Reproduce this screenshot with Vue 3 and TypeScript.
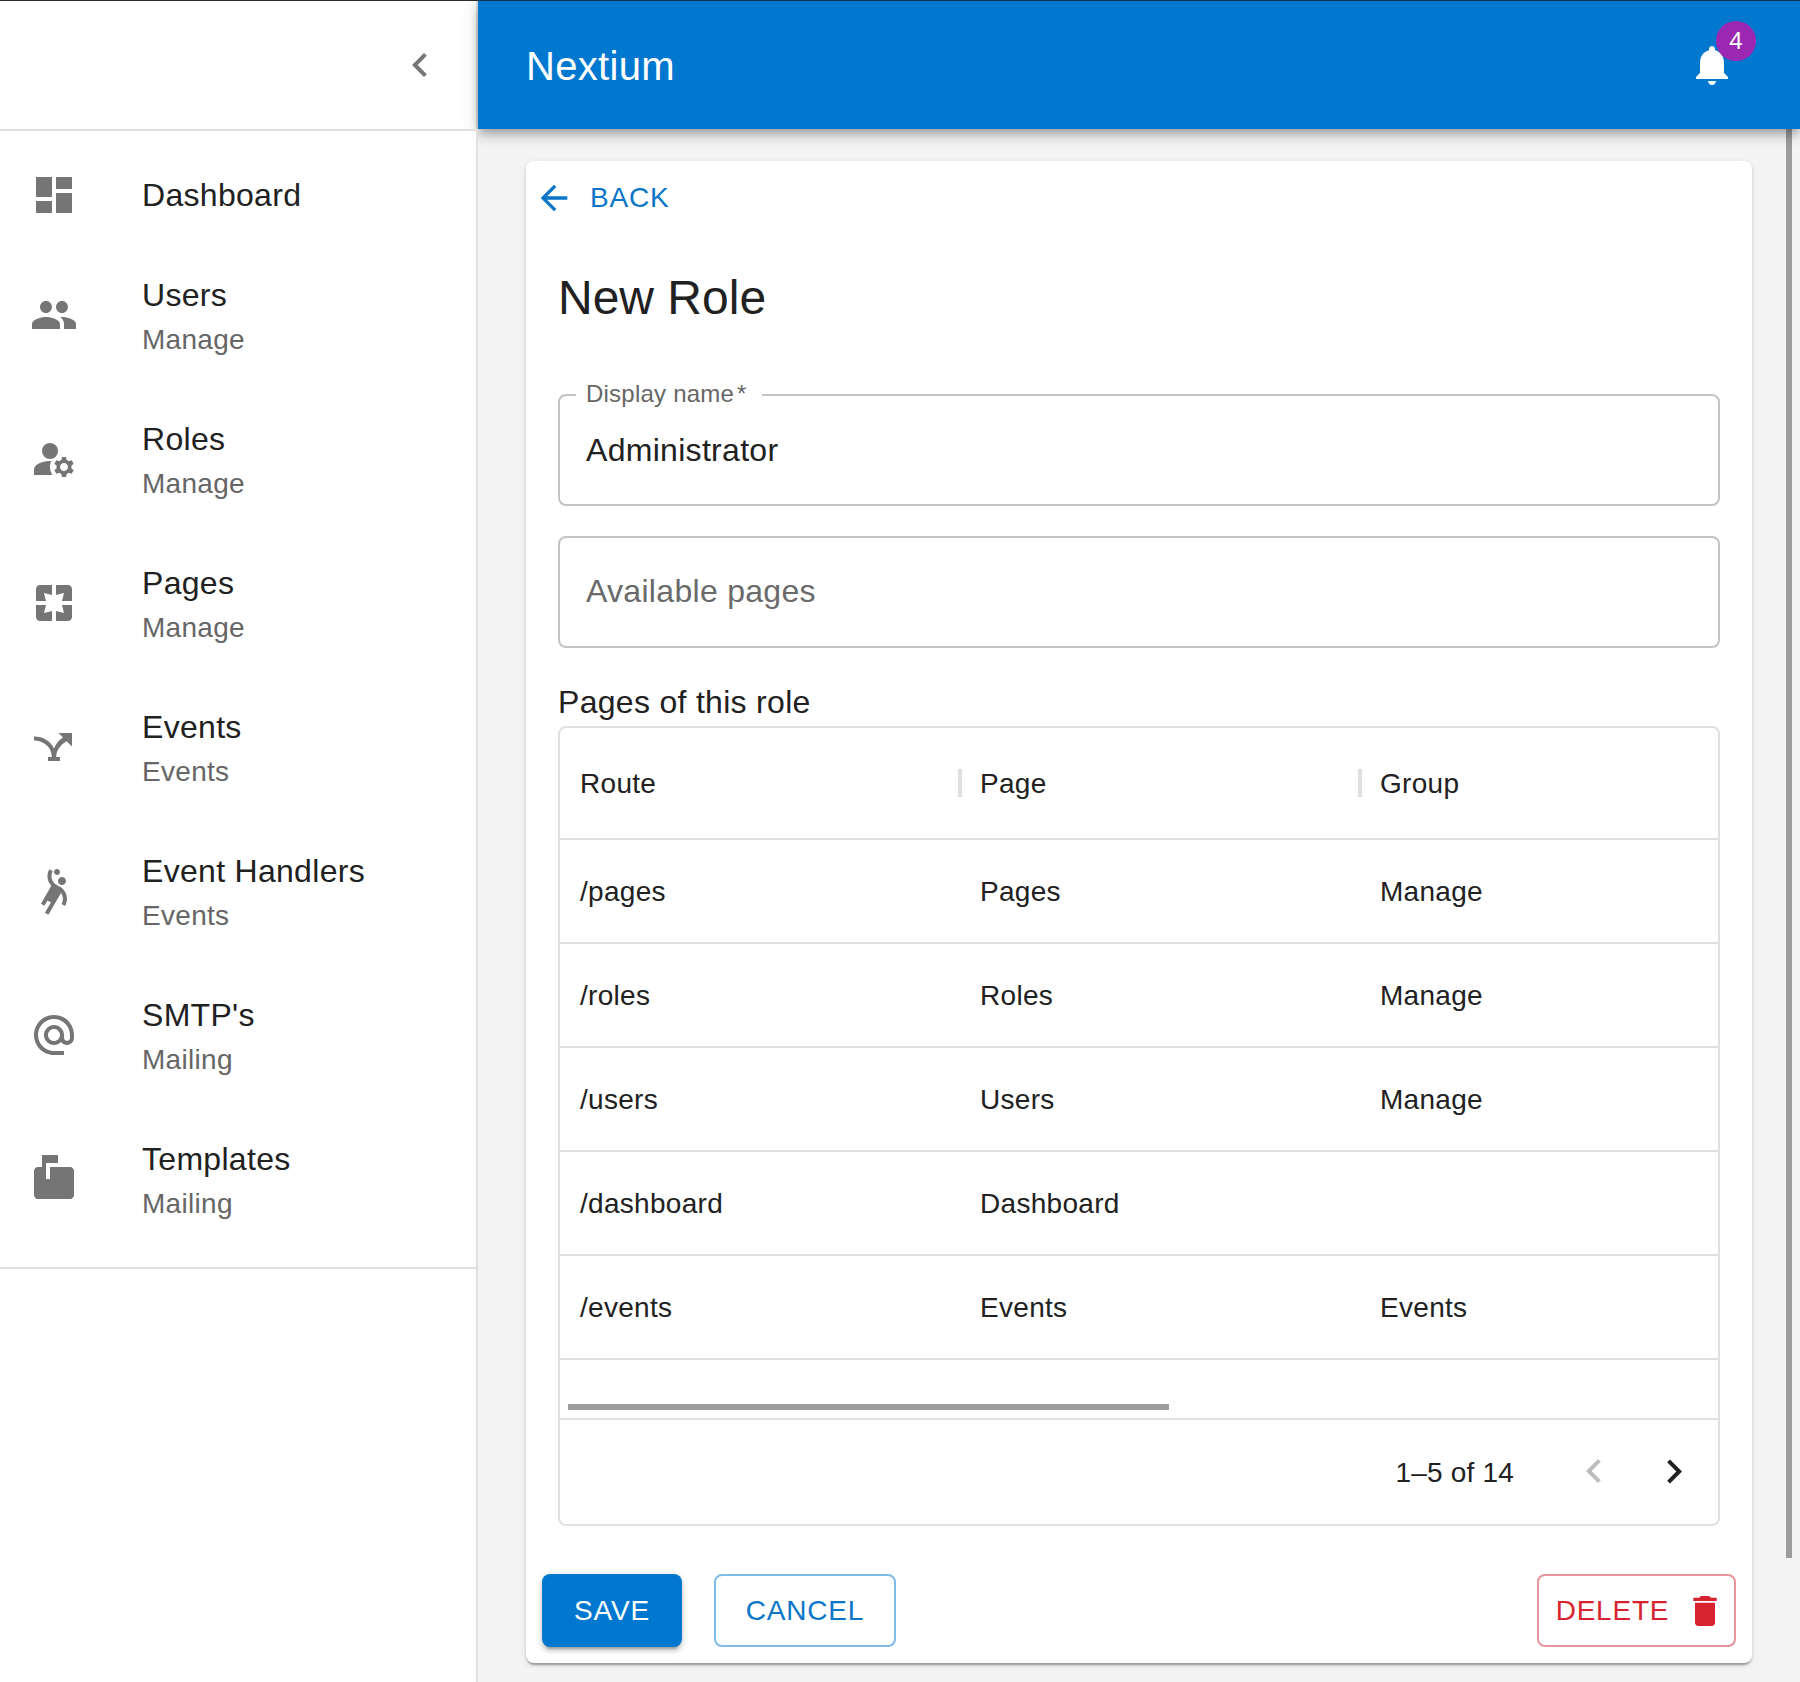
<script setup lang="ts">
interface NavItem {
  title: string
  group?: string
  paths: string[]
}

interface RolePage {
  route: string
  page: string
  group: string
}

const navItems: NavItem[] = [
  { title: 'Dashboard', paths: ['M3 13h8V3H3v10zm0 8h8v-6H3v6zm10 0h8V11h-8v10zm0-18v6h8V3h-8z'] },
  {
    title: 'Users',
    group: 'Manage',
    paths: [
      'M16 11c1.66 0 2.99-1.34 2.99-3S17.66 5 16 5c-1.66 0-3 1.34-3 3s1.34 3 3 3zm-8 0c1.66 0 2.99-1.34 2.99-3S9.66 5 8 5C6.34 5 5 6.34 5 8s1.34 3 3 3zm0 2c-2.33 0-7 1.17-7 3.5V19h14v-2.5c0-2.33-4.67-3.5-7-3.5zm8 0c-.29 0-.62.02-.97.05 1.16.84 1.97 1.97 1.97 3.45V19h6v-2.5c0-2.33-4.67-3.5-7-3.5z',
    ],
  },
  {
    title: 'Roles',
    group: 'Manage',
    paths: [
      'M10 4a4 4 0 1 0 0 8a4 4 0 1 0 0-8z',
      'M10.67 13.02c-.22-.01-.44-.02-.67-.02-2.42 0-4.68.67-6.61 1.82-.88.52-1.39 1.5-1.39 2.53V20h9.26c-.79-1.13-1.26-2.51-1.26-4 0-1.07.25-2.07.67-2.98z',
      'M20.75 16c0-.22-.03-.42-.06-.63l1.14-1.01-1-1.73-1.45.49c-.32-.27-.68-.48-1.08-.63L18 11h-2l-.3 1.49c-.4.15-.76.36-1.08.63l-1.45-.49-1 1.73 1.14 1.01c-.03.21-.06.41-.06.63s.03.42.06.63l-1.14 1.01 1 1.73 1.45-.49c.32.27.68.48 1.08.63L16 21h2l.3-1.49c.4-.15.76-.36 1.08-.63l1.45.49 1-1.73-1.14-1.01c.03-.21.06-.41.06-.63zM17 18c-1.1 0-2-.9-2-2s.9-2 2-2 2 .9 2 2-.9 2-2 2z',
    ],
  },
  {
    title: 'Pages',
    group: 'Manage',
    paths: [
      'M3 5v6h5L7 7l4 1V3H5c-1.1 0-2 .9-2 2zm5 8H3v6c0 1.1.9 2 2 2h6v-5l-4 1 1-4zm9 4l-4-1v5h6c1.1 0 2-.9 2-2v-6h-5l1 4zm2-14h-6v5l4-1-1 4h5V5c0-1.1-.9-2-2-2z',
    ],
  },
  {
    title: 'Events',
    group: 'Events',
    paths: [
      'M2 6.8C6.5 6.8 10.3 9 12 12.8C13 10.400 14.500 8.500 16.500 7.300L14.200 5H21v6.800L18.300 9.100C15.200 11 13.100 13.600 13.100 17H15v2H9v-2h1.900C10.900 12.300 7 8.800 2 8.800z',
    ],
  },
  {
    title: 'Event Handlers',
    group: 'Events',
    paths: [
      'M14.27 6c-.55.95-.22 2.18.73 2.73.95.55 2.18.22 2.73-.73.55-.95.22-2.18-.73-2.73-.95-.55-2.18-.22-2.73.73z',
      'M15.84 10.41s-1.63-.94-2.6-1.5c-2.38-1.38-3.2-4.44-1.82-6.82l-1.73-1C8.1 3.83 8.6 7.21 10.66 9.4l-5.15 8.92 1.73 1 1.5-2.6 1.73 1-3 5.2 1.73 1 6.29-10.89c1.14 1.55 1.33 3.69.31 5.46l1.73 1c1.6-2.75 1.28-6.58-1.69-9.08z',
      'M12.75 3.8c.72.41 1.63.17 2.05-.55.41-.72.17-1.63-.55-2.05-.72-.41-1.63-.17-2.05.55-.41.72-.17 1.64.55 2.05z',
    ],
  },
  {
    title: "SMTP's",
    group: 'Mailing',
    paths: [
      'M12 1.95c-5.52 0-10 4.48-10 10s4.48 10 10 10h5v-2h-5c-4.34 0-8-3.66-8-8s3.66-8 8-8 8 3.66 8 8v1.43c0 .79-.71 1.57-1.5 1.57s-1.5-.78-1.5-1.57v-1.43c0-2.76-2.24-5-5-5s-5 2.24-5 5 2.24 5 5 5c1.38 0 2.64-.56 3.54-1.47.65.89 1.77 1.47 2.96 1.47 1.97 0 3.5-1.6 3.5-3.57v-1.43c0-5.52-4.48-10-10-10zm0 13c-1.66 0-3-1.34-3-3s1.34-3 3-3 3 1.34 3 3-1.34 3-3 3z',
    ],
  },
  {
    title: 'Templates',
    group: 'Mailing',
    paths: ['M20 6H10v6H8V4h6V0H6v6H4c-1.1 0-2 .9-2 2v12c0 1.1.9 2 2 2h16c1.1 0 2-.9 2-2V8c0-1.1-.9-2-2-2z'],
  },
]

const columns: string[] = ['Route', 'Page', 'Group']

const rows: RolePage[] = [
  { route: '/pages', page: 'Pages', group: 'Manage' },
  { route: '/roles', page: 'Roles', group: 'Manage' },
  { route: '/users', page: 'Users', group: 'Manage' },
  { route: '/dashboard', page: 'Dashboard', group: '' },
  { route: '/events', page: 'Events', group: 'Events' },
]
</script>

<template>
  <div class="window">
    <aside class="sidebar">
      <div class="sidebar-head">
        <svg class="icon" viewBox="0 0 24 24"><path d="M15.41 7.41L14 6l-6 6 6 6 1.41-1.41L10.83 12z" /></svg>
      </div>
      <nav class="nav">
        <a v-for="item in navItems" :key="item.title" class="nav-item" :class="{ single: !item.group }">
          <svg class="icon" viewBox="0 0 24 24">
            <path v-for="(d, i) in item.paths" :key="i" :d="d" />
          </svg>
          <span class="nav-text">
            <span class="nav-title">{{ item.title }}</span>
            <span v-if="item.group" class="nav-group">{{ item.group }}</span>
          </span>
        </a>
      </nav>
      <div class="sidebar-rest"></div>
    </aside>

    <div class="page">
      <header class="appbar">
        <h1 class="brand">Nextium</h1>
        <div class="bell">
          <svg class="icon" viewBox="0 0 24 24">
            <path d="M12 22c1.1 0 2-.9 2-2h-4c0 1.1.89 2 2 2zm6-6v-5c0-3.07-1.64-5.64-4.5-6.32V4c0-.83-.67-1.5-1.5-1.5s-1.5.67-1.5 1.5v.68C7.63 5.36 6 7.92 6 11v5l-2 2v1h16v-1l-2-2z" />
          </svg>
          <span class="badge">4</span>
        </div>
      </header>

      <div class="content">
        <main class="card">
          <button class="back">
            <svg viewBox="0 0 24 24"><path d="M20 11H7.83l5.59-5.59L12 4l-8 8 8 8 1.41-1.41L7.83 13H20v-2z" /></svg>
            BACK
          </button>

          <div class="form">
            <h2 class="title">New Role</h2>
            <div class="field">
              <label class="label">Display name<span class="required">*</span></label>
              <span>Administrator</span>
            </div>
            <div class="field empty"><span>Available pages</span></div>

            <h3 class="subtitle">Pages of this role</h3>
            <div class="grid">
              <div class="grid-row grid-head">
                <div v-for="c in columns" :key="c" class="cell head-cell">{{ c }}</div>
              </div>
              <div v-for="r in rows" :key="r.route" class="grid-row">
                <div class="cell">{{ r.route }}</div>
                <div class="cell">{{ r.page }}</div>
                <div class="cell">{{ r.group }}</div>
              </div>
              <div class="grid-scroll"><div class="thumb"></div></div>
              <div class="grid-foot">
                <span class="range">1–5 of 14</span>
                <svg class="icon pager disabled" viewBox="0 0 24 24"><path d="M15.41 16.09l-4.58-4.59 4.58-4.59L14 5.5l-6 6 6 6z" /></svg>
                <svg class="icon pager" viewBox="0 0 24 24"><path d="M8.59 16.34l4.58-4.59-4.58-4.59L10 5.75l6 6-6 6z" /></svg>
              </div>
            </div>
          </div>

          <div class="actions">
            <button class="btn save">SAVE</button>
            <button class="btn cancel">CANCEL</button>
            <button class="btn delete">
              DELETE
              <svg viewBox="0 0 24 24"><path d="M6 19c0 1.1.9 2 2 2h8c1.1 0 2-.9 2-2V7H6v12zM19 4h-3.5l-1-1h-5l-1 1H5v2h14V4z" /></svg>
            </button>
          </div>
        </main>
        <div class="page-scroll"></div>
      </div>
    </div>
    <div class="top-edge"></div>
  </div>
</template>

<style>
body {
  margin: 0;
  background: #f4f4f4;
}
</style>

<style scoped>
* {
  box-sizing: border-box;
}
.window {
  position: relative;
  display: flex;
  width: 1800px;
  height: 1682px;
  padding-top: 1px;
  overflow: hidden;
  background: #f4f4f4;
  color: #212121;
  font-family: 'Liberation Sans', Arial, Helvetica, sans-serif;
  font-size: 32px;
}
.top-edge {
  position: absolute;
  inset: 0 0 auto 0;
  z-index: 5;
  height: 1px;
  background: linear-gradient(to right, #2a2a2c 478px, #12324e 478px);
}
h1,
h2,
h3 {
  margin: 0;
  font-weight: 400;
}
button {
  border: 0;
  background: none;
  font: inherit;
}
svg {
  display: block;
  flex: none;
  fill: currentColor;
}
.icon {
  width: 48px;
  height: 48px;
}

/* Sidebar */
.sidebar {
  display: flex;
  flex-direction: column;
  flex: none;
  width: 478px;
}
.sidebar-head {
  display: flex;
  align-items: center;
  justify-content: flex-end;
  height: 128px;
  padding-right: 32px;
  border-right: 2px solid #e0e0e0;
  background: #fff;
  color: #757575;
}
.nav {
  position: relative;
  z-index: 3;
  padding: 16px 0;
  border: solid #e0e0e0;
  border-width: 2px 2px 2px 0;
  background: #fff;
}
.nav-item {
  display: flex;
  align-items: center;
  height: 144px;
  padding-left: 30px;
  color: #757575;
}
.nav-item.single {
  height: 96px;
}
.nav-text {
  display: flex;
  flex-direction: column;
  margin-left: 64px;
}
.nav-title {
  color: #212121;
  line-height: 48px;
  letter-spacing: 0.3px;
}
.nav-group {
  height: 40px;
  color: #666;
  font-size: 28px;
  line-height: 42px;
  letter-spacing: 0.3px;
}
.sidebar-rest {
  flex: 1;
  border-right: 2px solid #e0e0e0;
  background: #fff;
}

/* Top bar */
.page {
  display: flex;
  flex-direction: column;
  flex: 1;
}
.appbar {
  position: relative;
  z-index: 2;
  display: flex;
  align-items: center;
  justify-content: space-between;
  height: 128px;
  padding: 0 64px 0 48px;
  background: #0078cf;
  color: #fff;
  box-shadow:
    0 4px 8px -2px rgba(0, 0, 0, 0.2),
    0 8px 10px rgba(0, 0, 0, 0.14),
    0 2px 20px rgba(0, 0, 0, 0.12);
}
.brand {
  padding-top: 2px;
  font-size: 40px;
  line-height: 64px;
  letter-spacing: 0.3px;
}
.bell {
  position: relative;
}
.badge {
  position: absolute;
  top: -20px;
  right: -20px;
  width: 40px;
  height: 40px;
  border-radius: 20px;
  background: #9c27b0;
  font-size: 24px;
  line-height: 40px;
  text-align: center;
}

/* Content */
.content {
  display: flex;
  flex: 1;
  align-items: flex-start;
}
.card {
  display: flex;
  flex-direction: column;
  align-items: stretch;
  width: 1226px;
  height: 1502px;
  margin: 32px 34px 0 48px;
  border-radius: 8px;
  background: #fff;
  box-shadow:
    0 4px 2px -2px rgba(0, 0, 0, 0.2),
    0 2px 2px rgba(0, 0, 0, 0.14),
    0 2px 6px rgba(0, 0, 0, 0.12);
}
.page-scroll {
  width: 6px;
  height: 1429px;
  background: #9c9c9c;
}
.back {
  display: flex;
  align-items: center;
  gap: 16px;
  align-self: flex-start;
  height: 74px;
  padding: 0 8px;
  color: #0b76c8;
  font-size: 28px;
  letter-spacing: 0.8px;
}
.back svg,
.delete svg {
  width: 40px;
  height: 40px;
}
.form {
  padding: 31px 32px 0;
}
.title {
  font-size: 48px;
  line-height: 64px;
}
.field {
  position: relative;
  display: flex;
  align-items: center;
  height: 112px;
  margin-top: 64px;
  padding: 0 26px;
  border: 2px solid #c4c4c4;
  border-radius: 8px;
  letter-spacing: 0.3px;
}
.field.empty {
  margin-top: 30px;
  padding-bottom: 2px;
  color: #6a6a6a;
}
.label {
  position: absolute;
  top: -14px;
  left: 16px;
  width: 186px;
  padding-left: 10px;
  background: #fff;
  color: #666;
  font-size: 24px;
  line-height: 24px;
  letter-spacing: 0.225px;
}
.required {
  margin-left: 3px;
}
.subtitle {
  margin-top: 30px;
  font-size: 32px;
  line-height: 48px;
  letter-spacing: 0.3px;
}

/* Data grid */
.grid {
  border: 2px solid #e0e0e0;
  border-radius: 8px;
  font-size: 28px;
  letter-spacing: 0.3px;
}
.grid-row {
  display: flex;
  height: 104px;
  border-bottom: 2px solid #e0e0e0;
}
.grid-head {
  height: 112px;
}
.cell {
  display: flex;
  align-items: center;
  flex: none;
  width: 400px;
  padding: 2px 0 0 20px;
}
.cell:last-child {
  width: auto;
}
.head-cell:not(:last-child)::after {
  content: '';
  width: 4px;
  height: 28px;
  margin: -2px -2px 0 auto;
  background: #e0e0e0;
}
.grid-scroll {
  display: flex;
  align-items: flex-end;
  height: 60px;
  padding: 0 8px 8px;
  border-bottom: 2px solid #e0e0e0;
}
.thumb {
  width: 601px;
  height: 6px;
  background: #9e9e9e;
}
.grid-foot {
  display: flex;
  align-items: center;
  justify-content: flex-end;
  height: 104px;
  padding-right: 20px;
}
.range {
  margin-right: 56px;
  padding-top: 2px;
  letter-spacing: 0.2px;
}
.pager.disabled {
  margin-right: 32px;
  color: #bdbdbd;
}

/* Form actions */
.actions {
  display: flex;
  gap: 32px;
  margin-top: 48px;
  padding: 0 16px;
}
.btn {
  display: flex;
  align-items: center;
  justify-content: center;
  height: 73px;
  padding: 0;
  border-radius: 8px;
  font-size: 28px;
  letter-spacing: 0.8px;
}
.save {
  width: 140px;
  background: #0078cf;
  color: #fff;
  box-shadow:
    0 6px 2px -4px rgba(0, 0, 0, 0.2),
    0 4px 4px rgba(0, 0, 0, 0.14),
    0 2px 10px rgba(0, 0, 0, 0.12);
}
.cancel {
  width: 182px;
  border: 2px solid #80bbe7;
  color: #0b76c8;
}
.delete {
  gap: 16px;
  width: 199px;
  margin-left: auto;
  padding-left: 8px;
  border: 2px solid #e4959c;
  color: #d7232f;
}
</style>
